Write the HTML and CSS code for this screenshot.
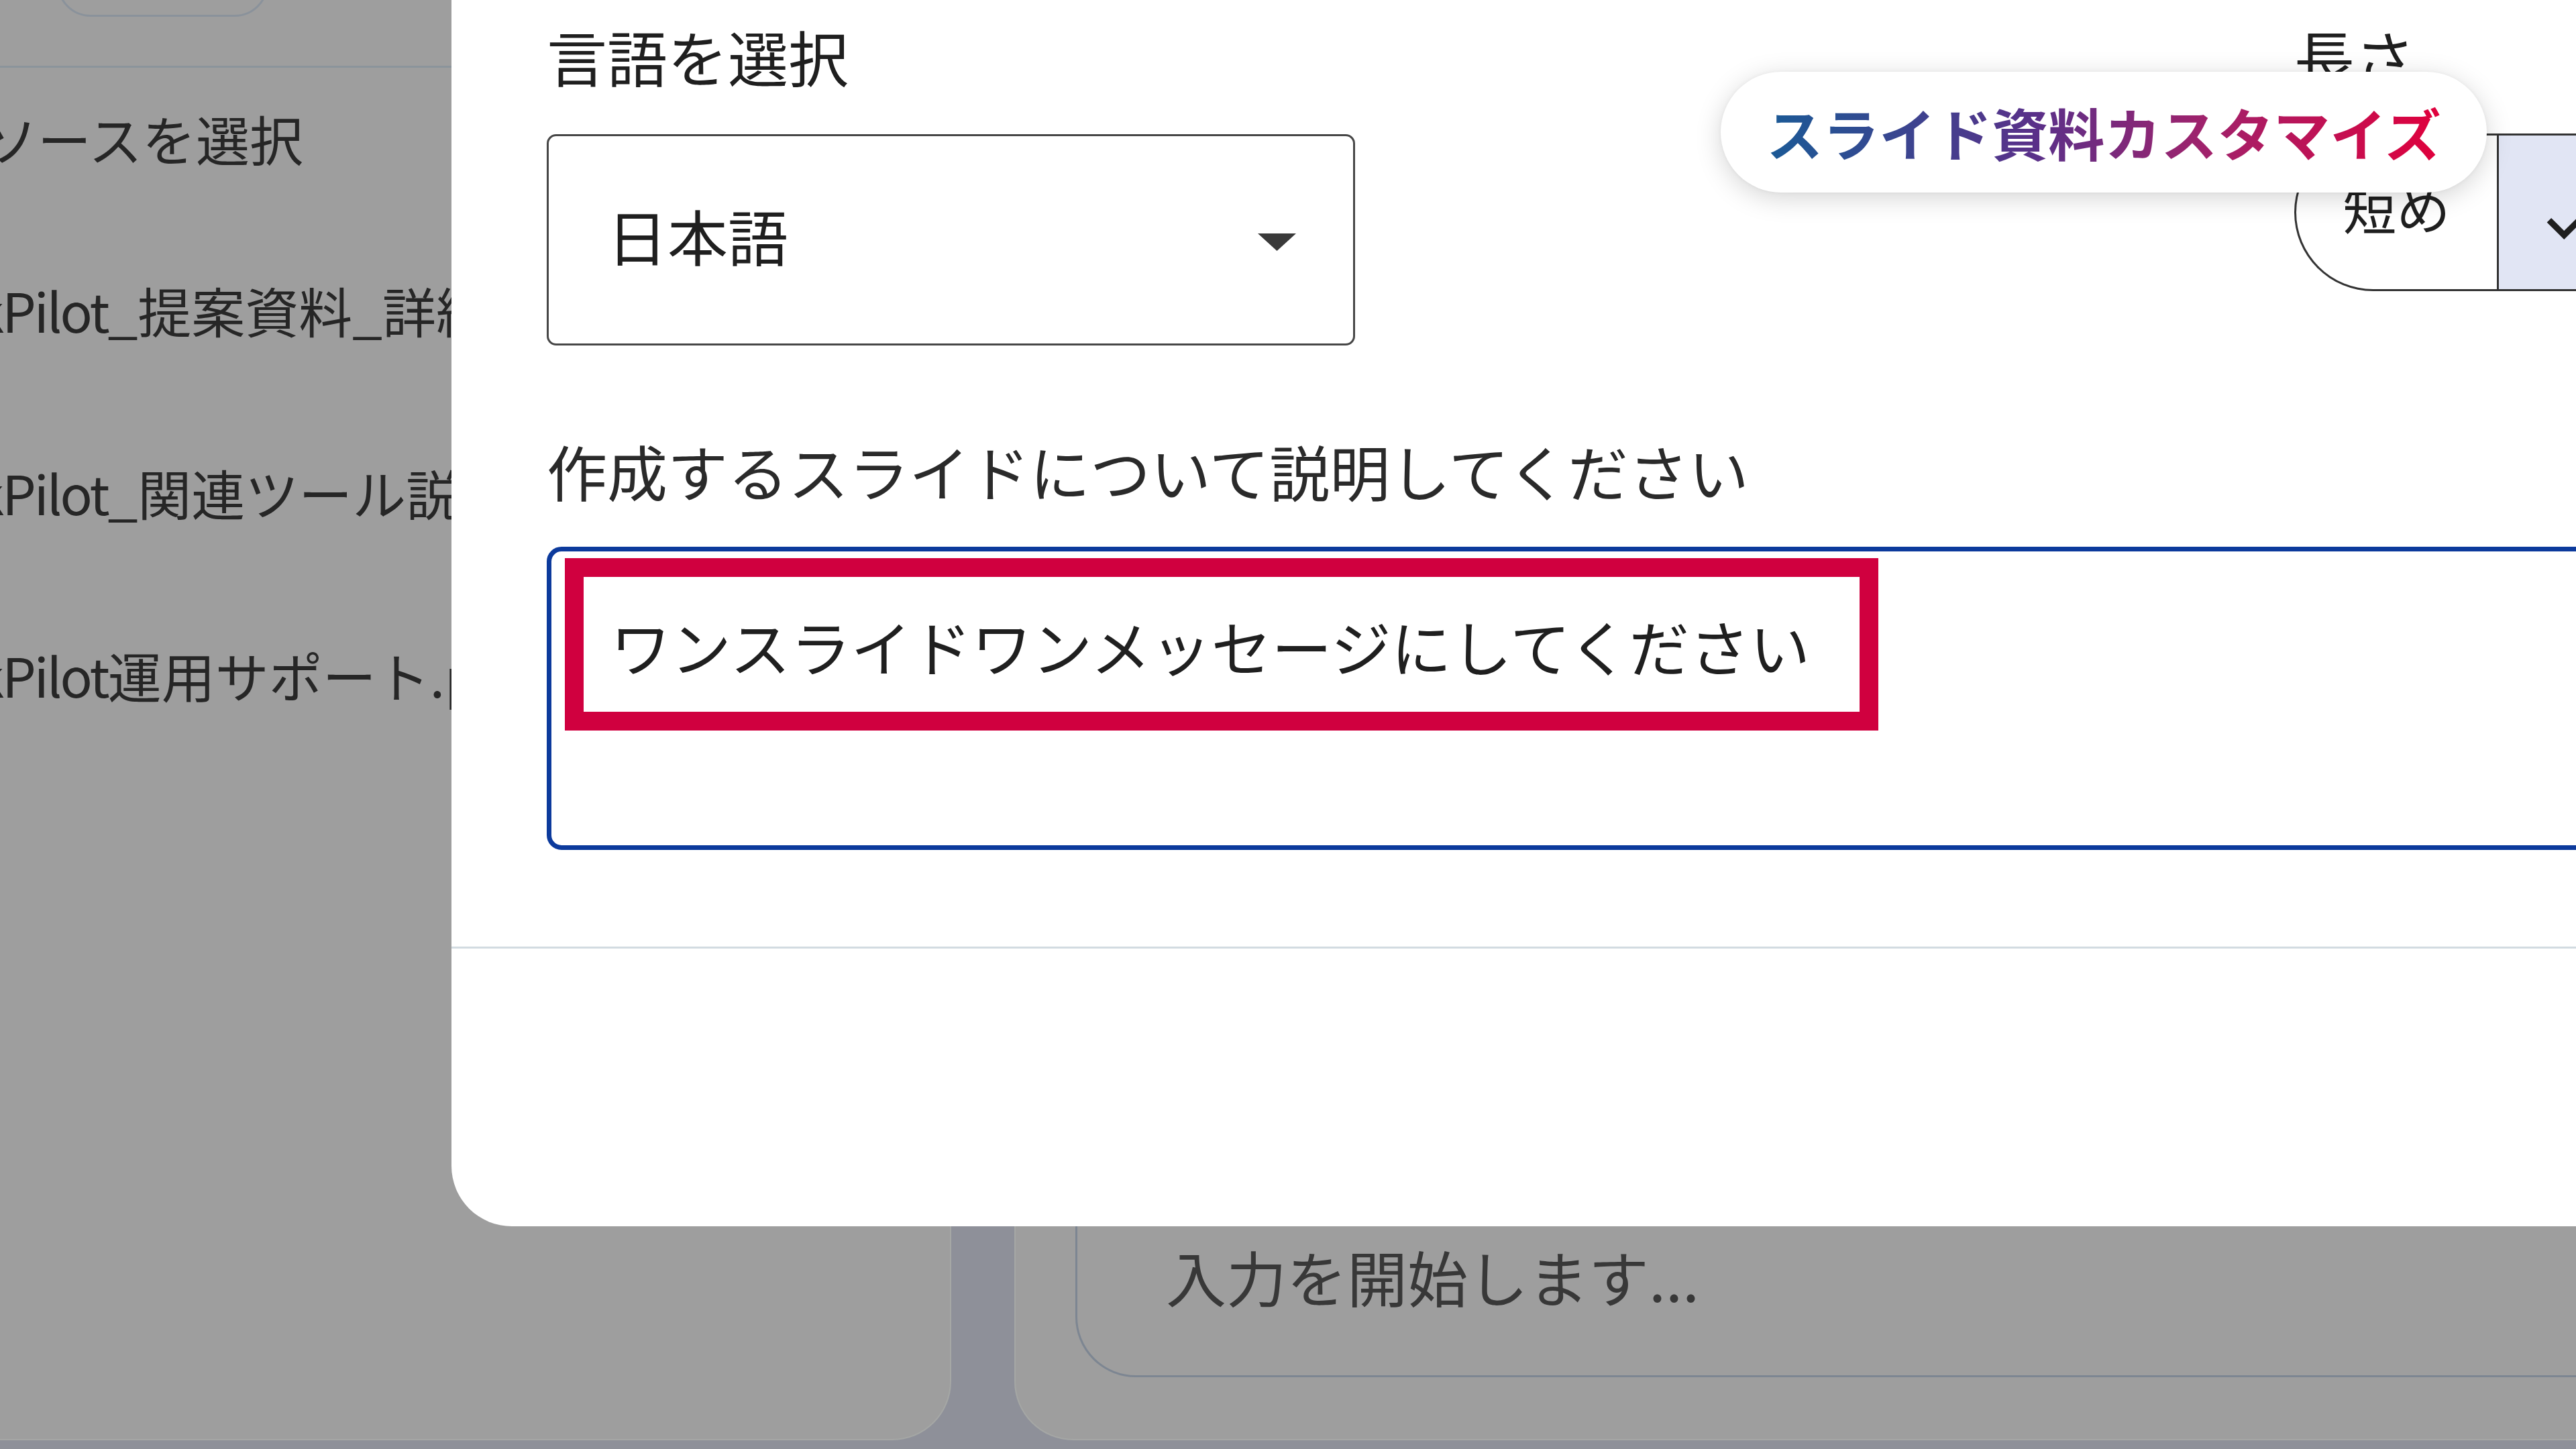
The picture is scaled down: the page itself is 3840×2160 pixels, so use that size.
FILE: index.html
```html
<!DOCTYPE html>
<html lang="ja">
<head>
<meta charset="utf-8">
<title>スライド資料カスタマイズ</title>
<link rel="stylesheet" href="styles.css">
</head>
<body>
<div class="page">
  <aside class="sources">
    <div class="src-head"><div class="src-pill"></div></div>
    <ul class="src-list">
      <li class="src-all">ソースを選択</li>
      <li class="src-file"><span class="latin">kPilot</span>_提案資料_詳細.pdf</li>
      <li class="src-file"><span class="latin">kPilot</span>_関連ツール説明.pdf</li>
      <li class="src-file"><span class="latin">kPilot</span>運用サポート.pdf</li>
    </ul>
  </aside>
  <section class="chat">
    <div class="composer"><span class="placeholder">入力を開始します...</span></div>
  </section>
</div>

<div class="modal">
  <div class="modal-body">
    <div class="row">
      <div class="field lang">
        <div class="label">言語を選択</div>
        <div class="select">
          <span class="select-text">日本語</span>
          <svg class="caret" width="57" height="26" viewBox="0 0 57 26"><path d="M0 0h57L28.5 26z" fill="#3a3a3a"/></svg>
        </div>
      </div>
      <div class="field length">
        <div class="label">長さ</div>
        <div class="seg">
          <div class="seg-btn short"><span>短め</span></div>
          <div class="seg-btn on">
            <svg class="check" width="110" height="110" viewBox="0 0 24 24"><path d="M9 16.17L4.83 12l-1.42 1.41L9 19 21 7l-1.41-1.41z" fill="#1f1f1f"/></svg>
            <span>デフォルト</span>
          </div>
        </div>
      </div>
    </div>
    <div class="label desc-label">作成するスライドについて説明してください</div>
    <div class="desc">
      <span class="desc-text">ワンスライドワンメッセージにしてください</span>
      <div class="highlight"></div>
    </div>
  </div>
  <div class="modal-foot"></div>
  <div class="tip"><span class="tip-text">スライド資料カスタマイズ</span></div>
</div>
</body>
</html>
```
FILE: styles.css
```css
html, body {
  margin: 0;
  padding: 0;
}
body {
  width: 3840px;
  height: 2160px;
  overflow: hidden;
  position: relative;
  background: #8e9099;
  font-family: "Noto Sans CJK JP", "Noto Sans", sans-serif;
  color: #1f1f1f;
}

/* background page (dimmed) */
.page {
  display: flex;
  gap: 94px;
  width: 4300px;
  height: 2147px;
}
.sources {
  flex: 0 0 1518px;
  box-sizing: border-box;
  margin-left: -100px;
  background: #9e9e9e;
  border-right: 2px solid #a5a7a5;
  border-bottom: 2px solid #a5a7a5;
  border-bottom-right-radius: 88px;
}
.src-head {
  display: flex;
  align-items: flex-start;
  height: 98px;
  border-bottom: 3px solid #8b949b;
}
.src-pill {
  margin: -75px 0 0 185px;
  width: 315px;
  height: 100px;
  box-sizing: border-box;
  border: 3px solid #8a929b;
  border-radius: 50px;
}
.src-list {
  list-style: none;
  margin: 0;
  padding: 50px 0 0 76px;
  font-size: 80px;
  line-height: 108px;
  white-space: nowrap;
  color: #262626;
}
.src-all {
  margin-bottom: 148px;
}
.src-file {
  margin-left: -14px;
}
.latin {
  letter-spacing: -3px;
}
.src-file + .src-file {
  margin-top: 164px;
}

.chat {
  flex: 1;
  box-sizing: border-box;
  background: #9e9e9e;
  border-left: 2px solid #a5a7a5;
  border-bottom: 2px solid #a5a7a5;
  border-bottom-left-radius: 88px;
  display: flex;
  flex-direction: column;
  justify-content: flex-end;
  padding: 0 0 92px 89px;
}
.composer {
  height: 400px;
  box-sizing: border-box;
  border: 3px solid #7d8692;
  border-radius: 90px;
  padding: 192px 0 0 132px;
  font-size: 90px;
  line-height: 108px;
  color: #383838;
  white-space: nowrap;
}

/* modal */
.modal {
  position: absolute;
  left: 673px;
  top: 0;
  width: 3400px;
  height: 1828px;
  background: #ffffff;
  border-bottom-left-radius: 90px;
  display: flex;
  flex-direction: column;
}
.modal-body {
  padding: 29px 0 144px 142px;
}
.row {
  display: flex;
  align-items: flex-start;
  gap: 1400px;
}
.lang {
  flex: 0 0 1205px;
}
.length {
  flex: 0 0 900px;
}
.label {
  font-size: 90px;
  line-height: 108px;
  color: #1f1f1f;
  white-space: nowrap;
}
.select {
  margin-top: 63px;
  height: 315px;
  box-sizing: border-box;
  border: 3px solid #474747;
  border-radius: 14px;
  display: flex;
  align-items: center;
  justify-content: space-between;
  padding: 0 85px 16px 87px;
  font-size: 90px;
  line-height: 108px;
}
.caret {
  margin-top: 22px;
}
.seg {
  margin-top: 62px;
  height: 235px;
  box-sizing: border-box;
  display: flex;
  border: 3px solid #333333;
  border-right: none;
  border-radius: 118px 0 0 118px;
  overflow: hidden;
}
.seg-btn {
  display: flex;
  align-items: center;
  font-size: 80px;
  line-height: 96px;
  white-space: nowrap;
}
.seg-btn.short {
  flex: 0 0 302px;
  justify-content: center;
  border-right: 3px solid #333333;
  padding-bottom: 20px;
  box-sizing: border-box;
}
.seg-btn.on {
  flex: 1;
  background: #e1e5f4;
  padding-left: 56px;
  gap: 20px;
}
.check {
  margin-top: 16px;
  flex: 0 0 auto;
}
.desc-label {
  margin-top: 132px;
  color: #2a2a2a;
}
.desc {
  position: relative;
  margin-top: 60px;
  width: 3200px;
  height: 452px;
  box-sizing: border-box;
  border: 7px solid #0c3a9c;
  border-radius: 22px;
  padding: 86px 0 0 88px;
  font-size: 90px;
  line-height: 108px;
  white-space: nowrap;
}
.highlight {
  position: absolute;
  left: 20px;
  top: 10px;
  width: 1958px;
  height: 257px;
  box-sizing: border-box;
  border: 28px solid #d0003f;
}
.modal-foot {
  flex: 1;
  border-top: 3px solid #d2dbe1;
}

/* floating callout */
.tip {
  position: absolute;
  left: 1892px;
  top: 107px;
  width: 1142px;
  height: 180px;
  border-radius: 90px;
  background: #ffffff;
  box-shadow: 0 8px 38px rgba(0, 0, 0, 0.17), 0 0 6px rgba(0, 0, 0, 0.05);
  display: flex;
  align-items: center;
  justify-content: center;
}
.tip-text {
  font-size: 84px;
  font-weight: 700;
  line-height: 100px;
  white-space: nowrap;
  background: linear-gradient(90deg, #1a5a96 0%, #5a3089 40%, #a0226c 65%, #e0003c 100%);
  -webkit-background-clip: text;
  background-clip: text;
  color: transparent;
}
```
